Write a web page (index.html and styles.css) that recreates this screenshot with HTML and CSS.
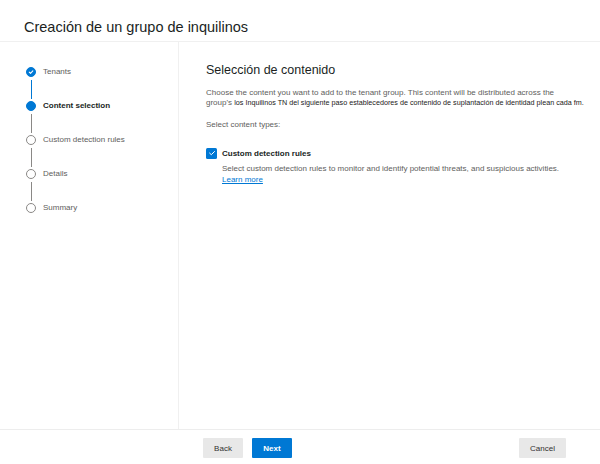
FILE: index.html
```html
<!DOCTYPE html>
<html lang="es">
<head>
<meta charset="utf-8">
<title>Creación de un grupo de inquilinos</title>
<link rel="stylesheet" href="styles.css">
</head>
<body>
<div class="app">
  <header class="header"><h1 class="title">Creación de un grupo de inquilinos</h1></header>
  <div class="main">
    <nav class="steps">
      <div class="step done">
        <div class="marker"><span class="dot"><svg viewBox="0 0 10 10" width="10" height="10"><path d="M2.8 5.2 L4.4 6.7 L7.3 3.6" fill="none" stroke="#fff" stroke-width="1.3" stroke-linecap="round" stroke-linejoin="round"/></svg></span><span class="line blue"></span></div>
        <span class="label">Tenants</span>
      </div>
      <div class="step current">
        <div class="marker"><span class="dot"></span><span class="line"></span></div>
        <span class="label">Content selection</span>
      </div>
      <div class="step">
        <div class="marker"><span class="dot"></span><span class="line"></span></div>
        <span class="label">Custom detection rules</span>
      </div>
      <div class="step">
        <div class="marker"><span class="dot"></span><span class="line"></span></div>
        <span class="label">Details</span>
      </div>
      <div class="step last">
        <div class="marker"><span class="dot"></span></div>
        <span class="label">Summary</span>
      </div>
    </nav>
    <section class="content">
      <h2 class="heading">Selección de contenido</h2>
      <p class="desc">Choose the content you want to add to the tenant group. This content will be distributed across the <span class="nowrap">group's <span class="odd">los Inquilinos TN del siguiente paso establecedores de contenido de suplantación de identidad plean cada fm.</span></span></p>
      <p class="desc types">Select content types:</p>
      <div class="option">
        <span class="checkbox"><svg viewBox="0 0 10 10" width="10" height="10"><path d="M2.6 5.1 L4.3 6.7 L7.5 3.5" fill="none" stroke="#fff" stroke-width="1" stroke-linecap="round" stroke-linejoin="round"/></svg></span>
        <div class="option-text">
          <div class="option-title">Custom detection rules</div>
          <div class="option-desc">Select custom detection rules to monitor and identify potential threats, and suspicious activities.</div>
          <a class="link" href="#">Learn more</a>
        </div>
      </div>
    </section>
  </div>
  <footer class="footer">
    <div class="nav-buttons">
      <button class="btn">Back</button>
      <button class="btn primary">Next</button>
    </div>
    <button class="btn cancel">Cancel</button>
  </footer>
</div>
</body>
</html>
```
FILE: styles.css
```css
* { box-sizing: border-box; }
html, body { margin: 0; padding: 0; }
body {
  width: 600px;
  height: 464px;
  background: #fff;
  font-family: "Liberation Sans", Arial, sans-serif;
  color: #323130;
}
.app { display: flex; flex-direction: column; height: 464px; }
.header {
  height: 42px;
  border-bottom: 1px solid #f0f0f0;
  padding: 18px 0 0 24px;
}
.title {
  margin: 0;
  font-size: 14.5px;
  font-weight: normal;
  color: #201f1e;
  line-height: 18px;
}
.main { flex: 1; display: flex; min-height: 0; }
.steps {
  width: 179px;
  border-right: 1px solid #f0f0f0;
  padding-top: 25px;
  padding-left: 26px;
}
.step { display: flex; height: 34px; }
.marker {
  width: 10px;
  display: flex;
  flex-direction: column;
  align-items: center;
}
.dot {
  width: 10px; height: 10px;
  border-radius: 50%;
  border: 1px solid #8a8886;
  background: #fff;
  display: flex; align-items: center; justify-content: center;
  flex: none;
}
.step.done .dot, .step.current .dot { border-color: #0078d4; background: #0078d4; }
.line { width: 1px; flex: 1; background: #8a8886; margin: 3px 0 2px; }
.line.blue { background: #0078d4; }
.label {
  margin-left: 7px;
  font-size: 8px;
  line-height: 10px;
  color: #605e5c;
}
.step.current .label { font-weight: bold; color: #201f1e; }
.content { flex: 1; padding: 20px 0 0 27px; }
.heading {
  margin: 0 0 10px;
  font-size: 12.5px;
  font-weight: normal;
  color: #201f1e;
  line-height: 16px;
}
.desc {
  margin: 0;
  font-size: 8px;
  line-height: 9.5px;
  color: #605e5c;
  width: 352px;
}
.nowrap { white-space: nowrap; }
.odd { font-size: 7.2px; color: #1b1a19; }
.types { margin-top: 13px; }
.option { display: flex; margin-top: 18px; }
.checkbox {
  width: 11px; height: 11px;
  background: #0078d4;
  border-radius: 1.5px;
  display: flex; align-items: center; justify-content: center;
  flex: none;
}
.option-text { margin-left: 5px; }
.option-title { font-size: 8px; font-weight: bold; color: #201f1e; line-height: 11px; }
.option-desc { font-size: 8px; color: #605e5c; line-height: 10px; margin-top: 5px; }
.link { font-size: 8px; color: #0078d4; line-height: 10px; text-decoration: underline; display: block; margin-top: 1px; }
.footer {
  height: 35px;
  border-top: 1px solid #ededed;
  display: flex;
  align-items: flex-start;
  padding: 8px 34px 0 203px;
  justify-content: space-between;
}
.nav-buttons { display: flex; gap: 9px; }
.btn {
  height: 20px;
  border: none;
  border-radius: 1px;
  background: #e8e8e8;
  font-family: "Liberation Sans", Arial, sans-serif;
  font-size: 8px;
  color: #323130;
  padding: 0;
  width: 40px;
}
.btn.primary { background: #0078d4; color: #fff; font-weight: bold; }
.btn.cancel { width: 47px; }
```
